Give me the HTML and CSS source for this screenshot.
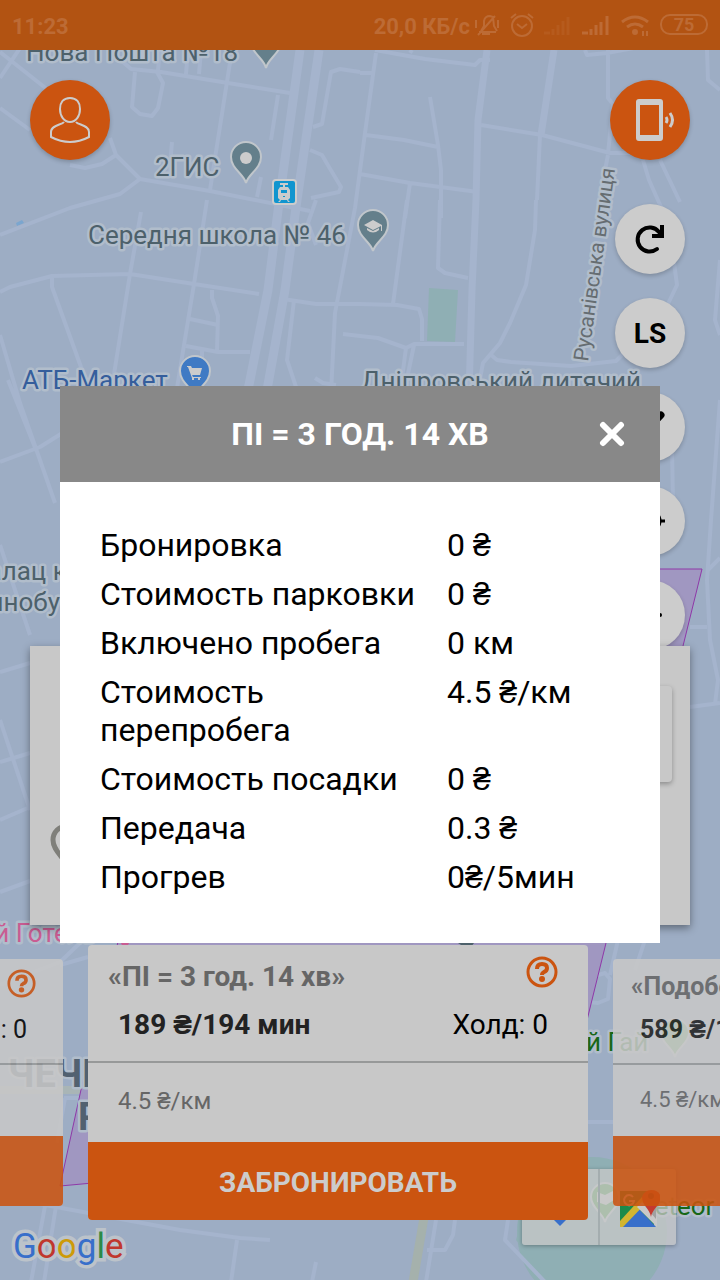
FILE: index.html
```html
<!DOCTYPE html>
<html lang="ru">

<head>
    <meta charset="UTF-8" />
    <meta name="viewport" content="width=device-width, initial-scale=1.0" />
    <title>Тарифы</title>
    <link rel="stylesheet" href="styles.css">
</head>

<body>
    <div class="app">
        <!-- Map -->
        <svg class="map" viewBox="0 50 720 1230" preserveAspectRatio="xMidYMid slice">
            <g class="area">
                <path d="M429 288l29 2-3 52-28-1z" />
                <circle cx="592" cy="1232" r="75" />
                <path d="M516 1240l10-35 30-30v110z" />
            </g>
            <path class="water" d="M16 223l6-3 2 3-7 3z" />
            <g class="road">
                <path d="M0 52l48 38 M0 78l20-30 M0 108l30 22 M70 165l15 3 17-4 14-9-6-17 M116 155l24 24 70 12 100 20 M140 179l-20 15-50 14-70 27" />
                <path d="M115 55l16 14 30 3 67 11 62 10 M135 72l-3 35 8 7 12 2 6-8 5-25-6-11 M158 70l2-20 M186 74l2-24 M199 74l2-24" />
                <path d="M278 95l-7 45 M232 50l-22 140 M172 142l-3 35 M261 177l-4 20" />
                <path d="M0 292l10-5 42-11 78-2 64 10 65 10 M141 212l-11 62-15 94-4 25 M207 200l-13 84-18 110 M52 277l0 10 29 80 12 30 M212 290l0 8 6 18-1 35 M190 319l28 6 M186 346l32 6h32 M202 350v20" />
                <path d="M0 462l40-15 40-25 M0 335l20 68 35 100 M8 380l28 70 M0 545l30 90 M0 672l30-9 M0 762l30-9 M0 820l30-13 M0 892l30-11 M0 720l30 90 M60 965l28-8 M0 985l60-23 40-38" />
                <path d="M410 53l2 -3 M375 50l50 9 50 6 5-5h10 M376 53l-11 80-10 75-20 105-4 80 M360 73h12 M430 97l8 48 3 25v48 M366 135l38 5 34 7 M360 174l50 9 68 9 M410 183l-5 35" />
                <path d="M360 72l-20-3-9 3-9 52-9 3 M310 150l12 5 7 12 12 20-2 5-28 6 M407 200l-14 104 M440 200l-2 68 7 5 23 5 M316 245l-8-22 8-23 M283 299l33 5h44l37 1 22 4 3 10v22 M294 300l-7 60 10 30 M343 334l17 2 18 2 28 10 8-4h50 M414 345l-10 48 M406 348l-6 45 M315 378l8 5 13 2" />
                <path d="M536 200l-1 30-9 55-16 38-10 20-17 20-5 26 M490 354l7 6 14 2 60 4 45-5 8-8 M481 125l61 10 68 18h20 M608 155l-10 50 M608 50v48l5 6-5 50 M585 50l2 5 20-2 32-6 M540 135l-3 65 M643 160l6 20 20 45 8 60-12 25-10 40 M660 160l20 42 M707 50l1 30 12 10 M720 260l-5 60 5 15 M672 450l1 50M720 400l-9 120-4 60 3 60 8 40-3 24 M690 707l30-4 M588 978l17-5 5 6-2 20-10 4-10-1 M610 975l8-35 M690 627h17 M708 570l12-12 M635 970l10-30" />
                <path d="M45 1206l-14 76 M56 1206l-12 76 M40 1204l140 26 60 8 30 2 M237 1240l-6 42 M316 1262l-4 20 M436 1220l-10 62 M455 1220l-2 15-8 15-18 0 M508 1220l-3 20 40 42 M588 1122h25 M64 1098h24 M65 1098l-8 45" />
            </g>
            <g class="road road--mid">
                <path d="M487 50l-9 70-2 80-4 90-3 105 M554 50l-13 85" />
            </g>
            <g class="road road--wide">
                <path d="M300 50l-20 145-12 95-20 100 M319 50l-22 150-12 90-18 100" />
            </g>
            <path class="highway" d="M427 1200l-14 82" />
            <path class="park-line" d="M0 1090h90" />

            <path class="zone" d="M119 569H550l152 0-19 77-77 297-46 187-260 34-240 22 24-110 35-138z" />

            <g class="poi-pin">
                <path transform="translate(266 68)" d="M0 0C-2-10-16-15-16-30a16 16 0 0 1 32 0C16-15 2-10 0 0z" />
                <path transform="translate(246 183)" d="M0 0C-2-9-15-14-15-26a15 15 0 0 1 30 0C15-14 2-9 0 0z" />
                <path transform="translate(373 251)" d="M0 0C-2-9-15-14-15-26a15 15 0 0 1 30 0C15-14 2-9 0 0z" />
                <path class="poi-pin--shop" transform="translate(195 397)" d="M0 0C-2-9-15-14-15-26a15 15 0 0 1 30 0C15-14 2-9 0 0z" />
                <path class="poi-pin--park" transform="translate(675 1057)" d="M0 0C-2-9-14-14-14-24a14 14 0 0 1 28 0C14-14 2-9 0 0z" />
                <path class="poi-pin--park" transform="translate(605 1222)" d="M0 0C-2-9-14-14-14-25a14 14 0 0 1 28 0C14-14 2-9 0 0z" />
            </g>
            <circle class="poi-mark" cx="246" cy="158" r="6" />
            <path class="poi-mark" d="M364 225l9-5 9 5v6h-1v-5l-8 4zM367 228l6 3 6-3v2q-6 5-12 0z" />
            <path class="poi-mark" d="M187 366h4l1 2h10l-2 7h-8l1 2h8v1h-9l-4-11h-1zM192 378h2v2h-2zM198 378h2v2h-2z" />
            <path class="poi-mark" d="M597 1192l8 3 8-4 1 9-8 5-9-3z" />
            <g class="tram">
                <rect x="273" y="180" width="23" height="24" rx="3" />
                <path d="M280 183h8v2h-3v2h3l2 3v8l-2 2 2 2h-2l-1-2h-6l-1 2h-2l2-2-2-2v-8l2-3h3v-2h-3z" />
                <path class="tram-window" d="M281 190h6v3h-6zM283 196h2v1h-2z" />
            </g>

            <g class="label">
                <text x="26" y="61">Нова Пошта №18</text>
                <text x="155" y="176">2ГИС</text>
                <text x="88" y="244">Середня школа № 46</text>
                <text x="361" y="390">Дніпровський дитячий</text>
                <text x="-31" y="580">Палац к</text>
                <text x="60" y="611" text-anchor="end">Машинобу</text>
                <text class="label--shop" x="22" y="389">АТБ-Маркет</text>
                <text class="label--hotel" x="-12" y="942">ій Готель</text>
                <text class="label--park" x="571" y="1051">ий Гай</text>
                <text class="label--park" x="632" y="1215">Meteor</text>
                <text class="label--street" transform="translate(588 362) rotate(-82)">Русанівська вулиця</text>
                <text class="label--district" x="8" y="1087">ЧЕЧЕЛ</text>
                <text class="label--district" x="78" y="1130">Р</text>
            </g>
            <path class="sign" d="M458 943l16 0-3 4-10-2z" />
            <circle class="hotel-dot" cx="125" cy="942" r="4" />
        </svg>

        <header class="status">
            <span class="status-time">11:23</span>
            <span class="status-speed">20,0 КБ/с</span>
            <svg width="234" height="28" viewBox="474 12 234 28" fill="none" stroke="currentColor" stroke-width="2">
                <path d="M479 32h17M481 31l3-5v-5q1-5 6-5l3 1 1 9 3 5M478 35l17-19M476 20v8M498 20v8M482 34h8" />
                <circle cx="522" cy="26" r="10" />
                <path d="M517 24l5 4 5-4M511 18l5-4M533 18l-5-4" />
                <g stroke-width="3">
                    <path d="M544 33h6M553 35v-6M558 35v-10M563 35v-14M568 35v-18" opacity=".35" />
                    <path d="M582 33h6M591 35v-6M596 35v-10M601 35v-13M607 35v-19" />
                    <path d="M622 22q13-10 26 0M627 27q8-6 16 0" />
                </g>
                <circle cx="635" cy="32" r="2" fill="currentColor" />
                <path d="M643 31v5M647 31v5" />
                <rect x="661" y="15" width="46" height="19" rx="9" />
                <text class="status-battery" x="684" y="31">75</text>
            </svg>
        </header>

        <a class="google" href="#"><span>G</span><span>o</span><span>o</span><span>g</span><span>l</span><span>e</span></a>

        <div class="map-toolbar">
            <button aria-label="Маршрут">
                <svg width="38" height="38" viewBox="0 0 38 38"><path d="M19 0l19 19-19 19L0 19z" fill="#386fca" /></svg>
            </button>
            <button aria-label="Google Maps">
                <svg width="44" height="44" viewBox="0 0 44 44">
                    <path d="M4 6h34v34H4z" fill="#1b8a4b" />
                    <path d="M4 42L22 23l18 19z" fill="#386fca" />
                    <path d="M4 36L26 12l5 5L7 42H4z" fill="#d1b531" />
                    <path d="M21 22l5-5 15 15v10z" fill="#c8c8c8" />
                    <path d="M40 18v16L28 20z" fill="#a0a0a0" />
                    <path d="M35 32c-1-8-9-12-9-20a10 10 0 0 1 19 0c0 8-9 12-10 20z" fill="#c5392f" />
                    <circle cx="35" cy="11" r="3" fill="#7d2018" />
                    <path d="M17 12a5 5 0 1 0 1 4h-5" fill="none" stroke="#ccc" stroke-width="2" />
                </svg>
            </button>
        </div>

        <button class="round round--left" aria-label="Профиль">
            <svg width="44" height="48" viewBox="48 96 44 48" fill="none" stroke="#ccc" stroke-width="2">
                <path d="M70 98c7 0 10 5 10 11 0 7-4 13-10 13s-10-6-10-13c0-6 3-11 10-11z" />
                <path d="M64 122c-2 3-13 3-13 10v5q19 10 38 0v-5c0-7-11-7-13-10" />
            </svg>
        </button>
        <div class="side">
            <button class="round" aria-label="Сигнал">
                <svg width="52" height="44" viewBox="624 98 52 44">
                    <path fill="#ccc" fill-rule="evenodd" d="M639 99h21q3 0 3 3v36q0 3-3 3h-21q-3 0-3-3v-36q0-3 3-3zM640 105v30h19v-30z" />
                    <path d="M666 117q2 3 0 6M670 113q5 7 0 14" fill="none" stroke="#ccc" stroke-width="3" />
                </svg>
            </button>
            <button class="fab" aria-label="Обновить">
                <svg width="32" height="32" viewBox="634 222 32 32" fill="none" stroke="#000" stroke-width="4">
                    <path d="M657 248a12 12 0 1 1 2-17l2 3" stroke-linecap="round" />
                    <path d="M662 224v11h-10" />
                </svg>
            </button>
            <button class="fab">LS</button>
            <button class="fab" aria-label="Инструменты">
                <svg width="32" height="32" viewBox="634 411 32 32"><path d="M640 437l21-22" stroke="#000" stroke-width="7" stroke-linecap="round" /></svg>
            </button>
            <button class="fab" aria-label="Моё место">
                <svg width="32" height="32" viewBox="634 504 32 32" fill="none" stroke="#000" stroke-width="3">
                    <circle cx="650" cy="520" r="10" />
                    <path d="M650 505v6M650 529v6M635 520h6M659 520h6" />
                </svg>
            </button>
            <button class="fab" aria-label="Меньше">
                <svg width="32" height="32" viewBox="634 598 32 32"><path d="M640 614h20" stroke="#000" stroke-width="4" stroke-linecap="round" /></svg>
            </button>
        </div>

        <!-- Car info, mostly under the dialog -->
        <section class="car">
            <div class="car-photo"></div>
            <svg class="car-pin" width="34" height="46" viewBox="0 0 34 46" fill="none" stroke="#7f7f7a" stroke-width="5">
                <path d="M17 43C14 34 3 28 3 17a14 14 0 0 1 28 0c0 11-11 17-14 26z" />
            </svg>
        </section>

        <section class="tariffs">
            <article class="card card--side">
                <div class="card-head">
                    <div class="card-title">
                        <span></span>
                        <button class="help" aria-label="Подробнее">
                            <svg viewBox="0 0 32 32"><circle cx="16" cy="16" r="14" /><path d="M11 13q0-5 5-5t5 4q0 3-3 4-2 1-2 3" /><circle class="help-dot" cx="16" cy="23" r="3" /></svg>
                        </button>
                    </div>
                    <div class="card-price"><b></b><span>: 0</span></div>
                </div>
                <p class="card-km"></p>
                <button class="book" aria-label="Забронировать"></button>
            </article>
            <article class="card">
                <div class="card-head">
                    <div class="card-title">
                        <span>«ПІ = 3 год. 14 хв»</span>
                        <button class="help" aria-label="Подробнее">
                            <svg viewBox="0 0 32 32"><circle cx="16" cy="16" r="14" /><path d="M11 13q0-5 5-5t5 4q0 3-3 4-2 1-2 3" /><circle class="help-dot" cx="16" cy="23" r="3" /></svg>
                        </button>
                    </div>
                    <div class="card-price"><b>189 ₴/194 мин</b><span>Холд: 0</span></div>
                </div>
                <p class="card-km">4.5 ₴/км</p>
                <button class="book">ЗАБРОНИРОВАТЬ</button>
            </article>
            <article class="card card--side">
                <div class="card-head">
                    <div class="card-title"><span>«Подобово»</span></div>
                    <div class="card-price"><b>589 ₴/1440 мин</b></div>
                </div>
                <p class="card-km">4.5 ₴/км</p>
                <button class="book" aria-label="Забронировать"></button>
            </article>
        </section>

        <div class="overlay">
            <div class="modal" role="dialog" aria-labelledby="modalTitle">
                <div class="modal-head">
                    <h1 id="modalTitle">ПІ = 3 ГОД. 14 ХВ</h1>
                    <button class="close" aria-label="Закрыть">
                        <svg width="26" height="26" viewBox="0 0 26 26"><path d="M4 4l18 18M22 4L4 22" stroke="#fff" stroke-width="6" stroke-linecap="round" /></svg>
                    </button>
                </div>
                <div class="modal-body">
                    <table>
                        <tr><th>Бронировка</th><td>0 ₴</td></tr>
                        <tr><th>Стоимость парковки</th><td>0 ₴</td></tr>
                        <tr><th>Включено пробега</th><td>0 км</td></tr>
                        <tr><th>Стоимость перепробега</th><td>4.5 ₴/км</td></tr>
                        <tr><th>Стоимость посадки</th><td>0 ₴</td></tr>
                        <tr><th>Передача</th><td>0.3 ₴</td></tr>
                        <tr><th>Прогрев</th><td>0₴/5мин</td></tr>
                    </table>
                </div>
            </div>
        </div>
    </div>
</body>

</html>
```
FILE: styles.css
```css
* {
    box-sizing: border-box;
}

body {
    margin: 0;
    font-family: Roboto, "Liberation Sans", sans-serif;
    color: #000;
}

button {
    border: none;
    padding: 0;
    font-family: inherit;
    cursor: pointer;
}

svg {
    display: block;
}

.app {
    position: relative;
    height: 100vh;
    overflow: hidden;
    background-color: #9dadc4;
}

/* map */
.map {
    position: absolute;
    top: 50px;
    width: 100%;
    height: calc(100% - 50px);
}

.area {
    fill: #8fafb4;
}

.water {
    fill: #7ba6cf;
}

.road {
    fill: none;
    stroke: #a5b4cd;
    stroke-width: 4;
    stroke-linejoin: round;
}

.road--mid {
    stroke-width: 7;
}

.road--wide {
    stroke-width: 9;
}

.highway {
    fill: none;
    stroke: #a5b1ac;
    stroke-width: 9;
}

.park-line {
    stroke: #a9b5b6;
    stroke-width: 8;
}

.zone {
    fill: #a097c1;
    stroke: #8f38a8;
    stroke-width: 1;
}

.poi-pin {
    fill: #647f8b;
    stroke: #c0c6cb;
    stroke-width: 2;
}

.poi-pin--shop {
    fill: #3f7ac4;
}

.poi-pin--park {
    fill: #5da45d;
}

.poi-mark {
    fill: #ccc;
}

.tram {
    fill: #ccc;
}

.tram rect {
    fill: #1195cf;
    stroke: #ccc;
    stroke-width: 2;
}

.tram .tram-window {
    fill: #1195cf;
}

.label {
    font-size: 26px;
    fill: #4d616b;
    stroke: #b1bdcb;
    stroke-width: 5;
    stroke-linejoin: round;
    paint-order: stroke;
}

.label--shop {
    fill: #355e9c;
}

.label--hotel {
    fill: #c95c92;
}

.label--park {
    fill: #176717;
}

.label--street {
    font-size: 21px;
    fill: #666d72;
}

.label--district {
    font-size: 38px;
    font-weight: bold;
    fill: #526170;
}

.sign {
    fill: #4d616b;
}

.hotel-dot {
    fill: #c95c92;
}

/* status bar */
.status {
    position: relative;
    display: flex;
    align-items: center;
    height: 50px;
    padding: 2px 12px 0;
    background-color: #b25312;
    color: #bd6b35;
    font-size: 22px;
    font-weight: bold;
}

.status-time {
    flex: 1;
}

.status-speed {
    margin-right: 4px;
}

.status-battery {
    fill: currentColor;
    stroke: none;
    font-size: 18px;
    text-anchor: middle;
}

.google {
    position: absolute;
    left: 13px;
    bottom: 12px;
    font-size: 35px;
    line-height: 42px;
    text-decoration: none;
    color: #386fca;
    -webkit-text-stroke: 7px #bcc3ca;
    paint-order: stroke;
}

.google span:nth-child(2),
.google span:nth-child(6) {
    color: #c0372d;
}

.google span:nth-child(3) {
    color: #cd9a08;
}

.google span:nth-child(5) {
    color: #2c8a46;
}

.map-toolbar {
    position: absolute;
    right: 44px;
    bottom: 35px;
    display: flex;
    width: 154px;
    height: 76px;
    border-radius: 3px;
    background-color: rgba(200, 200, 200, 0.75);
    box-shadow: 0 1px 4px rgba(0, 0, 0, 0.3);
}

.map-toolbar button {
    flex: 1;
    display: flex;
    align-items: center;
    justify-content: center;
    background: none;
}

.map-toolbar button + button {
    border-left: 2px solid #a4adaf;
}

/* round buttons */
.round,
.fab {
    display: flex;
    align-items: center;
    justify-content: center;
    border-radius: 50%;
    box-shadow: 0 2px 4px rgba(0, 0, 0, 0.2);
}

.round {
    width: 80px;
    height: 80px;
    background-color: #cb5410;
}

.round--left {
    position: absolute;
    left: 30px;
    top: 80px;
}

.side {
    position: absolute;
    right: 30px;
    top: 80px;
    display: flex;
    flex-direction: column;
    align-items: center;
    gap: 24px;
}

.side .round {
    margin-bottom: 20px;
}

.fab {
    width: 70px;
    height: 70px;
    background-color: #ccc;
    color: #000;
    font-size: 28px;
    font-weight: bold;
}

.car {
    position: absolute;
    left: 30px;
    right: 30px;
    bottom: 355px;
    display: flex;
    flex-direction: column;
    justify-content: space-between;
    height: 279px;
    padding: 40px 18px 56px 20px;
    background-color: #c8c8c8;
    box-shadow: 0 3px 8px rgba(0, 0, 0, 0.4);
}

.car-photo {
    align-self: flex-end;
    width: 50%;
    height: 96px;
    border-radius: 4px;
    box-shadow: 0 2px 5px rgba(0, 0, 0, 0.3);
}

/* tariff cards */
.tariffs {
    position: absolute;
    left: 0;
    right: 0;
    bottom: 60px;
    display: flex;
    align-items: center;
    justify-content: center;
    gap: 25px;
    padding-right: 44px;
}

.card {
    flex: none;
    width: 500px;
    border-radius: 4px;
    overflow: hidden;
    background-color: #c8c8c8;
    font-size: 28px;
}

.card-head {
    height: 118px;
    padding-top: 13px;
    border-bottom: 2px solid #979999;
}

.card-title,
.card-price {
    display: flex;
    align-items: center;
    justify-content: space-between;
    height: 36px;
}

.card-title {
    padding: 0 30px 0 20px;
    color: #666;
    font-weight: bold;
}

.card-price {
    margin-top: 12px;
    padding: 0 40px 0 30px;
}

.card-price b {
    color: #222;
}

.help {
    width: 32px;
    height: 32px;
    margin-bottom: 8px;
    background: none;
}

.help svg {
    width: 100%;
    fill: none;
    stroke: #cb5410;
    stroke-width: 3;
}

.help path {
    stroke-width: 4;
}

.help .help-dot {
    fill: #cb5410;
    stroke: none;
}

.card-km {
    height: 79px;
    margin: 0;
    padding: 0 30px;
    color: #666;
    font-size: 24px;
    line-height: 77px;
}

.book {
    display: block;
    width: 100%;
    height: 78px;
    padding-top: 3px;
    background-color: #cb5410;
    color: #ccc;
    font-size: 28px;
    font-weight: bold;
}

.card--side {
    width: 450px;
    opacity: 0.87;
    font-size: 25px;
}

.card--side .card-head {
    height: 106px;
    padding-top: 9px;
}

.card--side .card-title {
    padding: 0 27px 0 18px;
}

.card--side .card-price {
    margin-top: 7px;
    padding: 0 36px 0 27px;
}

.card--side .help {
    width: 29px;
    height: 29px;
    margin-bottom: 6px;
}

.card--side .card-km {
    height: 71px;
    padding: 0 27px;
    font-size: 22px;
    line-height: 69px;
}

.card--side .book {
    height: 70px;
}

/* dialog */
.overlay {
    position: absolute;
    top: 48px;
    right: 0;
    bottom: 0;
    left: 0;
    display: flex;
    align-items: center;
    justify-content: center;
    padding: 0 60px;
}

.modal {
    width: 100%;
    background-color: #fff;
}

.modal-head {
    position: relative;
    display: flex;
    align-items: center;
    justify-content: center;
    height: 96px;
    background-color: #888;
    color: #fff;
}

.modal-head h1 {
    margin: 0;
    font-size: 32px;
    line-height: 38px;
}

.close {
    position: absolute;
    right: 35px;
    background: none;
}

.modal-body {
    padding: 40px;
}

table {
    width: 100%;
    border-collapse: collapse;
    table-layout: fixed;
    font-size: 32px;
    line-height: 38px;
}

th,
td {
    padding: 4px 0 7px;
    font-weight: normal;
    text-align: left;
    vertical-align: top;
}

th {
    width: 347px;
    padding-right: 30px;
}
```
